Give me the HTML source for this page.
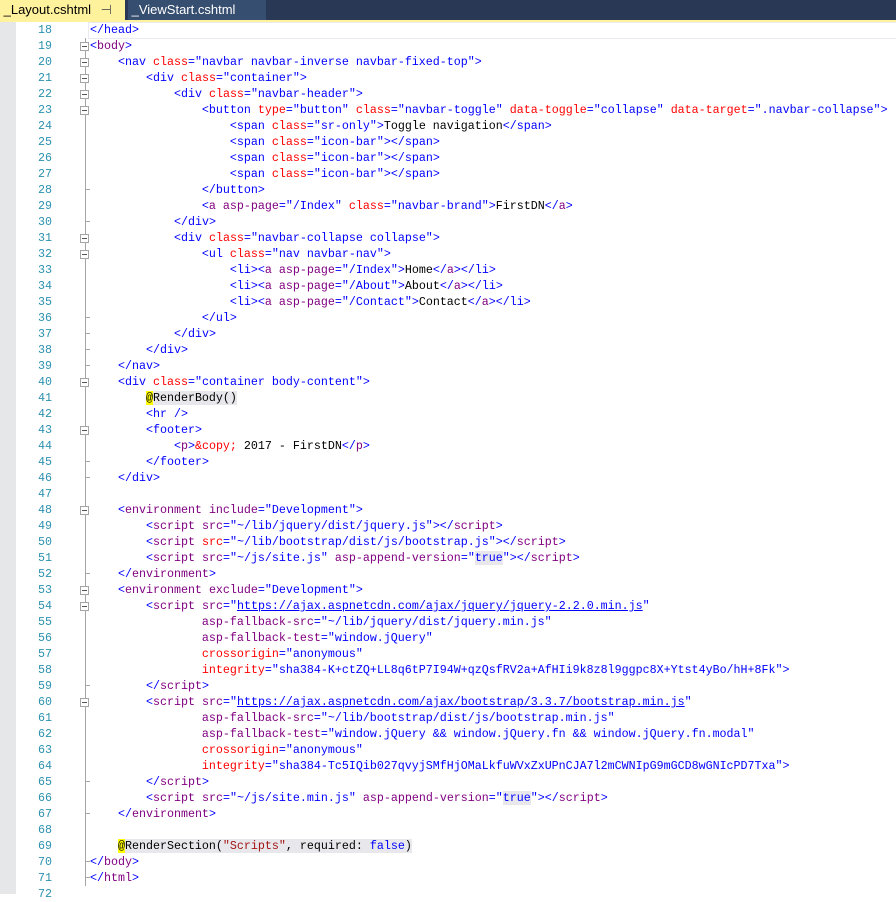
<!DOCTYPE html>
<html><head><meta charset="utf-8"><style>
body{margin:0;width:896px;height:894px;background:#fff;overflow:hidden;position:relative;font-family:"Liberation Mono",monospace;font-size:11.66px}
#tabs{position:absolute;left:0;top:0;width:896px;height:20px;background:#293955}
#t1{position:absolute;left:0;top:0;width:125px;height:20px;background:#fff29d;font-family:"Liberation Sans",sans-serif;font-size:13px;line-height:20px}
#t2{position:absolute;left:128px;top:0;width:138px;height:20px;background:#364e6f;color:#fff;font-family:"Liberation Sans",sans-serif;font-size:13px;line-height:20px}
#ybar{position:absolute;left:0;top:20px;width:896px;height:2px;background:#fff29d}
#gray{position:absolute;left:0;top:22px;width:16px;height:872px;background:#e6e7e8}
.r{position:absolute;left:0;height:16px;line-height:16px;white-space:pre;width:896px}
.n{position:absolute;left:16px;width:36px;text-align:right;color:#2b91af}
.c{position:absolute;left:90px}
.d{color:#0000ff}.e{color:#0000ff}.t{color:#800080}.a{color:#ff0000}.v{color:#0000ff}.u{color:#0000ff;text-decoration:underline}
.hl{background:#e8e8ec}.at{background:#ffff00}
#fl{position:absolute;left:85px;top:38px;width:1px;height:848px;background:#a5a5a5}
.fb{position:absolute;left:80px;width:9px;height:9px;border:1px solid #a5a5a5;background:#fff;box-sizing:border-box}
.fb:after{content:"";position:absolute;left:1px;top:3px;width:5px;height:1px;background:#555}
.tk{position:absolute;left:85px;width:5px;height:1px;background:#a5a5a5}
</style></head><body>
<div id="tabs"><div id="t1">&nbsp;_Layout.cshtml <span style="color:#555;margin-left:6px">⊣</span> <span style="color:#555;margin-left:4px">✕</span></div><div id="t2">&nbsp;_ViewStart.cshtml</div></div>
<div id="ybar"></div><div id="gray"></div>
<div style="position:absolute;left:88px;top:22px;width:808px;height:15px;border:1px solid #eaeaf2"></div>
<div id="fl"></div>
<div class="r" style="top:22px"><span class="n">18</span><span class="c"><span class="d">&lt;/</span><span class="e">head</span><span class="d">&gt;</span></span></div>
<div class="r" style="top:38px"><span class="n">19</span><span class="c"><span class="d">&lt;</span><span class="t">body</span><span class="d">&gt;</span></span></div>
<div class="r" style="top:54px"><span class="n">20</span><span class="c">    <span class="d">&lt;</span><span class="e">nav</span> <span class="a">class</span><span class="d">=</span><span class="v">"navbar navbar-inverse navbar-fixed-top"</span><span class="d">&gt;</span></span></div>
<div class="r" style="top:70px"><span class="n">21</span><span class="c">        <span class="d">&lt;</span><span class="e">div</span> <span class="a">class</span><span class="d">=</span><span class="v">"container"</span><span class="d">&gt;</span></span></div>
<div class="r" style="top:86px"><span class="n">22</span><span class="c">            <span class="d">&lt;</span><span class="e">div</span> <span class="a">class</span><span class="d">=</span><span class="v">"navbar-header"</span><span class="d">&gt;</span></span></div>
<div class="r" style="top:102px"><span class="n">23</span><span class="c">                <span class="d">&lt;</span><span class="e">button</span> <span class="a">type</span><span class="d">=</span><span class="v">"button"</span> <span class="a">class</span><span class="d">=</span><span class="v">"navbar-toggle"</span> <span class="a">data-toggle</span><span class="d">=</span><span class="v">"collapse"</span> <span class="a">data-target</span><span class="d">=</span><span class="v">".navbar-collapse"</span><span class="d">&gt;</span></span></div>
<div class="r" style="top:118px"><span class="n">24</span><span class="c">                    <span class="d">&lt;</span><span class="e">span</span> <span class="a">class</span><span class="d">=</span><span class="v">"sr-only"</span><span class="d">&gt;</span>Toggle navigation<span class="d">&lt;/</span><span class="e">span</span><span class="d">&gt;</span></span></div>
<div class="r" style="top:134px"><span class="n">25</span><span class="c">                    <span class="d">&lt;</span><span class="e">span</span> <span class="a">class</span><span class="d">=</span><span class="v">"icon-bar"</span><span class="d">&gt;&lt;/</span><span class="e">span</span><span class="d">&gt;</span></span></div>
<div class="r" style="top:150px"><span class="n">26</span><span class="c">                    <span class="d">&lt;</span><span class="e">span</span> <span class="a">class</span><span class="d">=</span><span class="v">"icon-bar"</span><span class="d">&gt;&lt;/</span><span class="e">span</span><span class="d">&gt;</span></span></div>
<div class="r" style="top:166px"><span class="n">27</span><span class="c">                    <span class="d">&lt;</span><span class="e">span</span> <span class="a">class</span><span class="d">=</span><span class="v">"icon-bar"</span><span class="d">&gt;&lt;/</span><span class="e">span</span><span class="d">&gt;</span></span></div>
<div class="r" style="top:182px"><span class="n">28</span><span class="c">                <span class="d">&lt;/</span><span class="e">button</span><span class="d">&gt;</span></span></div>
<div class="r" style="top:198px"><span class="n">29</span><span class="c">                <span class="d">&lt;</span><span class="t">a</span> <span class="t">asp-page</span><span class="d">=</span><span class="v">"/Index"</span> <span class="a">class</span><span class="d">=</span><span class="v">"navbar-brand"</span><span class="d">&gt;</span>FirstDN<span class="d">&lt;/</span><span class="t">a</span><span class="d">&gt;</span></span></div>
<div class="r" style="top:214px"><span class="n">30</span><span class="c">            <span class="d">&lt;/</span><span class="e">div</span><span class="d">&gt;</span></span></div>
<div class="r" style="top:230px"><span class="n">31</span><span class="c">            <span class="d">&lt;</span><span class="e">div</span> <span class="a">class</span><span class="d">=</span><span class="v">"navbar-collapse collapse"</span><span class="d">&gt;</span></span></div>
<div class="r" style="top:246px"><span class="n">32</span><span class="c">                <span class="d">&lt;</span><span class="e">ul</span> <span class="a">class</span><span class="d">=</span><span class="v">"nav navbar-nav"</span><span class="d">&gt;</span></span></div>
<div class="r" style="top:262px"><span class="n">33</span><span class="c">                    <span class="d">&lt;</span><span class="e">li</span><span class="d">&gt;&lt;</span><span class="t">a</span> <span class="t">asp-page</span><span class="d">=</span><span class="v">"/Index"</span><span class="d">&gt;</span>Home<span class="d">&lt;/</span><span class="t">a</span><span class="d">&gt;&lt;/</span><span class="e">li</span><span class="d">&gt;</span></span></div>
<div class="r" style="top:278px"><span class="n">34</span><span class="c">                    <span class="d">&lt;</span><span class="e">li</span><span class="d">&gt;&lt;</span><span class="t">a</span> <span class="t">asp-page</span><span class="d">=</span><span class="v">"/About"</span><span class="d">&gt;</span>About<span class="d">&lt;/</span><span class="t">a</span><span class="d">&gt;&lt;/</span><span class="e">li</span><span class="d">&gt;</span></span></div>
<div class="r" style="top:294px"><span class="n">35</span><span class="c">                    <span class="d">&lt;</span><span class="e">li</span><span class="d">&gt;&lt;</span><span class="t">a</span> <span class="t">asp-page</span><span class="d">=</span><span class="v">"/Contact"</span><span class="d">&gt;</span>Contact<span class="d">&lt;/</span><span class="t">a</span><span class="d">&gt;&lt;/</span><span class="e">li</span><span class="d">&gt;</span></span></div>
<div class="r" style="top:310px"><span class="n">36</span><span class="c">                <span class="d">&lt;/</span><span class="e">ul</span><span class="d">&gt;</span></span></div>
<div class="r" style="top:326px"><span class="n">37</span><span class="c">            <span class="d">&lt;/</span><span class="e">div</span><span class="d">&gt;</span></span></div>
<div class="r" style="top:342px"><span class="n">38</span><span class="c">        <span class="d">&lt;/</span><span class="e">div</span><span class="d">&gt;</span></span></div>
<div class="r" style="top:358px"><span class="n">39</span><span class="c">    <span class="d">&lt;/</span><span class="e">nav</span><span class="d">&gt;</span></span></div>
<div class="r" style="top:374px"><span class="n">40</span><span class="c">    <span class="d">&lt;</span><span class="e">div</span> <span class="a">class</span><span class="d">=</span><span class="v">"container body-content"</span><span class="d">&gt;</span></span></div>
<div class="r" style="top:390px"><span class="n">41</span><span class="c">        <span class="hl"><span class="at">@</span>RenderBody()</span></span></div>
<div class="r" style="top:406px"><span class="n">42</span><span class="c">        <span class="d">&lt;</span><span class="e">hr</span> <span class="d">/&gt;</span></span></div>
<div class="r" style="top:422px"><span class="n">43</span><span class="c">        <span class="d">&lt;</span><span class="e">footer</span><span class="d">&gt;</span></span></div>
<div class="r" style="top:438px"><span class="n">44</span><span class="c">            <span class="d">&lt;</span><span class="t">p</span><span class="d">&gt;</span><span class="a">&amp;copy;</span> 2017 - FirstDN<span class="d">&lt;/</span><span class="t">p</span><span class="d">&gt;</span></span></div>
<div class="r" style="top:454px"><span class="n">45</span><span class="c">        <span class="d">&lt;/</span><span class="e">footer</span><span class="d">&gt;</span></span></div>
<div class="r" style="top:470px"><span class="n">46</span><span class="c">    <span class="d">&lt;/</span><span class="e">div</span><span class="d">&gt;</span></span></div>
<div class="r" style="top:486px"><span class="n">47</span><span class="c"></span></div>
<div class="r" style="top:502px"><span class="n">48</span><span class="c">    <span class="d">&lt;</span><span class="t">environment</span> <span class="t">include</span><span class="d">=</span><span class="v">"Development"</span><span class="d">&gt;</span></span></div>
<div class="r" style="top:518px"><span class="n">49</span><span class="c">        <span class="d">&lt;</span><span class="t">script</span> <span class="t">src</span><span class="d">=</span><span class="v">"~/lib/jquery/dist/jquery.js"</span><span class="d">&gt;&lt;/</span><span class="t">script</span><span class="d">&gt;</span></span></div>
<div class="r" style="top:534px"><span class="n">50</span><span class="c">        <span class="d">&lt;</span><span class="t">script</span> <span class="a">src</span><span class="d">=</span><span class="v">"~/lib/bootstrap/dist/js/bootstrap.js"</span><span class="d">&gt;&lt;/</span><span class="t">script</span><span class="d">&gt;</span></span></div>
<div class="r" style="top:550px"><span class="n">51</span><span class="c">        <span class="d">&lt;</span><span class="t">script</span> <span class="t">src</span><span class="d">=</span><span class="v">"~/js/site.js"</span> <span class="t">asp-append-version</span><span class="d">=</span><span class="v">"<span class="hl">true</span>"</span><span class="d">&gt;&lt;/</span><span class="t">script</span><span class="d">&gt;</span></span></div>
<div class="r" style="top:566px"><span class="n">52</span><span class="c">    <span class="d">&lt;/</span><span class="t">environment</span><span class="d">&gt;</span></span></div>
<div class="r" style="top:582px"><span class="n">53</span><span class="c">    <span class="d">&lt;</span><span class="t">environment</span> <span class="t">exclude</span><span class="d">=</span><span class="v">"Development"</span><span class="d">&gt;</span></span></div>
<div class="r" style="top:598px"><span class="n">54</span><span class="c">        <span class="d">&lt;</span><span class="t">script</span> <span class="t">src</span><span class="d">=</span><span class="v">"<span class="u">https://ajax.aspnetcdn.com/ajax/jquery/jquery-2.2.0.min.js</span>"</span></span></div>
<div class="r" style="top:614px"><span class="n">55</span><span class="c">                <span class="t">asp-fallback-src</span><span class="d">=</span><span class="v">"~/lib/jquery/dist/jquery.min.js"</span></span></div>
<div class="r" style="top:630px"><span class="n">56</span><span class="c">                <span class="t">asp-fallback-test</span><span class="d">=</span><span class="v">"window.jQuery"</span></span></div>
<div class="r" style="top:646px"><span class="n">57</span><span class="c">                <span class="a">crossorigin</span><span class="d">=</span><span class="v">"anonymous"</span></span></div>
<div class="r" style="top:662px"><span class="n">58</span><span class="c">                <span class="a">integrity</span><span class="d">=</span><span class="v">"sha384-K+ctZQ+LL8q6tP7I94W+qzQsfRV2a+AfHIi9k8z8l9ggpc8X+Ytst4yBo/hH+8Fk"</span><span class="d">&gt;</span></span></div>
<div class="r" style="top:678px"><span class="n">59</span><span class="c">        <span class="d">&lt;/</span><span class="t">script</span><span class="d">&gt;</span></span></div>
<div class="r" style="top:694px"><span class="n">60</span><span class="c">        <span class="d">&lt;</span><span class="t">script</span> <span class="t">src</span><span class="d">=</span><span class="v">"<span class="u">https://ajax.aspnetcdn.com/ajax/bootstrap/3.3.7/bootstrap.min.js</span>"</span></span></div>
<div class="r" style="top:710px"><span class="n">61</span><span class="c">                <span class="t">asp-fallback-src</span><span class="d">=</span><span class="v">"~/lib/bootstrap/dist/js/bootstrap.min.js"</span></span></div>
<div class="r" style="top:726px"><span class="n">62</span><span class="c">                <span class="t">asp-fallback-test</span><span class="d">=</span><span class="v">"window.jQuery &amp;&amp; window.jQuery.fn &amp;&amp; window.jQuery.fn.modal"</span></span></div>
<div class="r" style="top:742px"><span class="n">63</span><span class="c">                <span class="a">crossorigin</span><span class="d">=</span><span class="v">"anonymous"</span></span></div>
<div class="r" style="top:758px"><span class="n">64</span><span class="c">                <span class="a">integrity</span><span class="d">=</span><span class="v">"sha384-Tc5IQib027qvyjSMfHjOMaLkfuWVxZxUPnCJA7l2mCWNIpG9mGCD8wGNIcPD7Txa"</span><span class="d">&gt;</span></span></div>
<div class="r" style="top:774px"><span class="n">65</span><span class="c">        <span class="d">&lt;/</span><span class="t">script</span><span class="d">&gt;</span></span></div>
<div class="r" style="top:790px"><span class="n">66</span><span class="c">        <span class="d">&lt;</span><span class="t">script</span> <span class="t">src</span><span class="d">=</span><span class="v">"~/js/site.min.js"</span> <span class="t">asp-append-version</span><span class="d">=</span><span class="v">"<span class="hl">true</span>"</span><span class="d">&gt;&lt;/</span><span class="t">script</span><span class="d">&gt;</span></span></div>
<div class="r" style="top:806px"><span class="n">67</span><span class="c">    <span class="d">&lt;/</span><span class="t">environment</span><span class="d">&gt;</span></span></div>
<div class="r" style="top:822px"><span class="n">68</span><span class="c"></span></div>
<div class="r" style="top:838px"><span class="n">69</span><span class="c">    <span class="hl"><span class="at">@</span>RenderSection(<span style="color:#a31515">"Scripts"</span>, required: <span class="v">false</span>)</span></span></div>
<div class="r" style="top:854px"><span class="n">70</span><span class="c"><span class="d">&lt;/</span><span class="t">body</span><span class="d">&gt;</span></span></div>
<div class="r" style="top:870px"><span class="n">71</span><span class="c"><span class="d">&lt;/</span><span class="t">html</span><span class="d">&gt;</span></span></div>
<div class="r" style="top:886px"><span class="n">72</span></div>
<div class="fb" style="top:42px"></div><div class="fb" style="top:58px"></div><div class="fb" style="top:74px"></div><div class="fb" style="top:90px"></div><div class="fb" style="top:106px"></div><div class="fb" style="top:234px"></div><div class="fb" style="top:250px"></div><div class="fb" style="top:378px"></div><div class="fb" style="top:426px"></div><div class="fb" style="top:506px"></div><div class="fb" style="top:586px"></div><div class="fb" style="top:602px"></div><div class="fb" style="top:698px"></div>
<div class="tk" style="top:189px"></div><div class="tk" style="top:221px"></div><div class="tk" style="top:317px"></div><div class="tk" style="top:333px"></div><div class="tk" style="top:349px"></div><div class="tk" style="top:365px"></div><div class="tk" style="top:461px"></div><div class="tk" style="top:477px"></div><div class="tk" style="top:573px"></div><div class="tk" style="top:685px"></div><div class="tk" style="top:781px"></div><div class="tk" style="top:813px"></div><div class="tk" style="top:861px"></div><div class="tk" style="top:877px"></div>
</body></html>
